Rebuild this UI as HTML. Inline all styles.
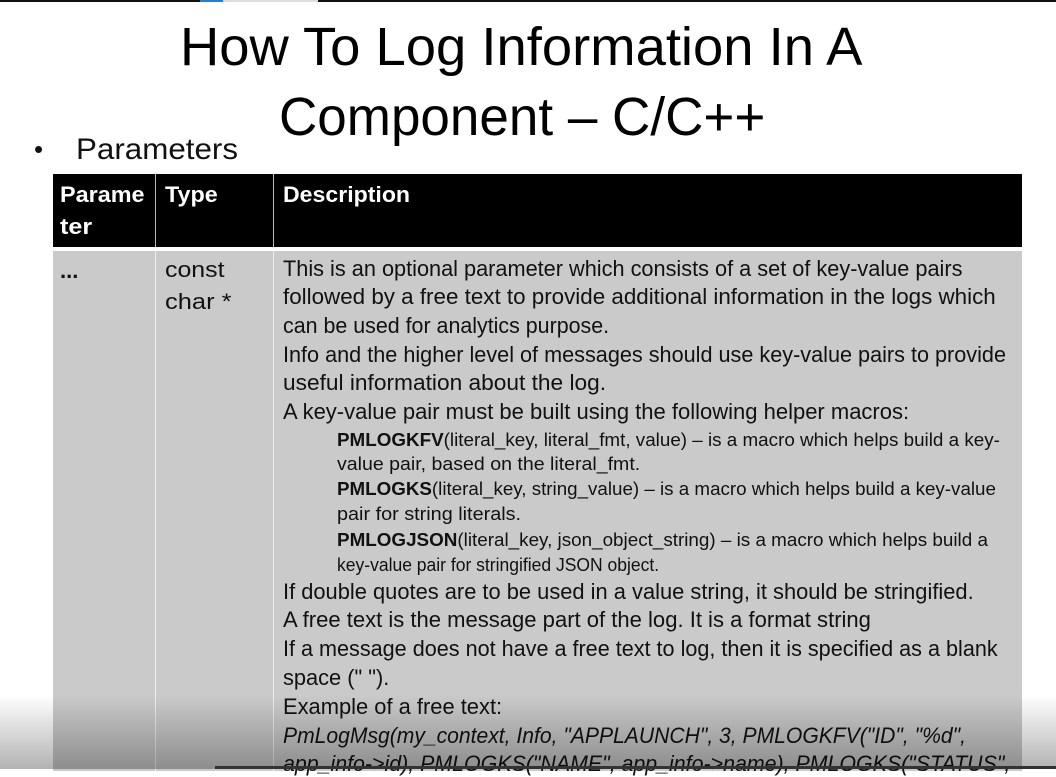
<!DOCTYPE html>
<html><head><meta charset="utf-8">
<style>
html,body{margin:0;padding:0}
body{width:1056px;height:769px;position:relative;overflow:hidden;background:#fff;font-family:"Liberation Sans",sans-serif;color:#111}
.l{position:absolute;white-space:nowrap;transform-origin:0 50%;}
.b{font-size:22px;line-height:26px}
.s{font-size:18px;line-height:22px}
.h{font-size:22px;line-height:26px;font-weight:bold;color:#fff}
.t{font-size:54px;line-height:60px;color:#000}
</style></head><body>
<div style="position:absolute;left:0;top:0;width:1056px;height:2px;background:#111"></div>
<div style="position:absolute;left:200px;top:0;width:23px;height:2px;background:#2a7ad8"></div>
<div style="position:absolute;left:223px;top:0;width:95px;height:2px;background:#ddd"></div>

<div class="l t" style="left:180px;top:17px" title="682">How To Log Information In A</div>
<div class="l t" style="left:279px;top:87px" title="486">Component – C/C++</div>
<div class="l" style="left:34px;top:134px;font-size:26px;line-height:30px">•</div>
<div class="l" style="left:76px;top:133px;font-size:30px;line-height:34px" title="162">Parameters</div>

<div style="position:absolute;left:53px;top:174px;width:969px;height:73px;background:#000"></div>
<div style="position:absolute;left:155px;top:174px;width:1px;height:73px;background:#bbb"></div>
<div style="position:absolute;left:273px;top:174px;width:1px;height:73px;background:#bbb"></div>
<div style="position:absolute;left:53px;top:251px;width:969px;height:520px;background:#cacaca"></div>
<div style="position:absolute;left:155px;top:251px;width:1px;height:520px;background:#eee"></div>
<div style="position:absolute;left:273px;top:251px;width:1px;height:520px;background:#eee"></div>

<div class="l h" style="left:60px;top:182px" title="85">Parame</div>
<div class="l h" style="left:60px;top:214px" title="32">ter</div>
<div class="l h" style="left:165px;top:182px" title="53">Type</div>
<div class="l h" style="left:283px;top:182px" title="127">Description</div>

<div class="l b" style="left:60px;top:258px;font-weight:bold">...</div>
<div class="l b" style="left:165px;top:257px" title="60">const</div>
<div class="l b" style="left:165px;top:289px" title="66">char *</div>

<div class="l b" style="left:283px;top:256px" title="679">This is an optional parameter which consists of a set of key-value pairs</div>
<div class="l b" style="left:283px;top:284px" title="713">followed by a free text to provide additional information in the logs which</div>
<div class="l b" style="left:283px;top:313px" title="326">can be used for analytics purpose.</div>
<div class="l b" style="left:283px;top:342px" title="723">Info and the higher level of messages should use key-value pairs to provide</div>
<div class="l b" style="left:283px;top:370px" title="323">useful information about the log.</div>
<div class="l b" style="left:283px;top:399px" title="626">A key-value pair must be built using the following helper macros:</div>
<div class="l s" style="left:337px;top:429px" title="663"><b>PMLOGKFV</b>(literal_key, literal_fmt, value) – is a macro which helps build a key-</div>
<div class="l s" style="left:337px;top:453px" title="303">value pair, based on the literal_fmt.</div>
<div class="l s" style="left:337px;top:478px" title="659"><b>PMLOGKS</b>(literal_key, string_value) – is a macro which helps build a key-value</div>
<div class="l s" style="left:337px;top:503px" title="184">pair for string literals.</div>
<div class="l s" style="left:337px;top:529px" title="651"><b>PMLOGJSON</b>(literal_key, json_object_string) – is a macro which helps build a</div>
<div class="l s" style="left:337px;top:554px" title="322">key-value pair for stringified JSON object.</div>
<div class="l b" style="left:283px;top:579px" title="691">If double quotes are to be used in a value string, it should be stringified.</div>
<div class="l b" style="left:283px;top:607px" title="588">A free text is the message part of the log. It is a format string</div>
<div class="l b" style="left:283px;top:636px" title="715">If a message does not have a free text to log, then it is specified as a blank</div>
<div class="l b" style="left:283px;top:665px" title="106">space (" ").</div>
<div class="l b" style="left:283px;top:694px" title="219">Example of a free text:</div>
<div class="l b" style="left:283px;top:723px;font-style:italic" title="683">PmLogMsg(my_context, Info, "APPLAUNCH", 3, PMLOGKFV("ID", "%d",</div>
<div class="l b" style="left:283px;top:751px;font-style:italic" title="727">app_info-&gt;id), PMLOGKS("NAME", app_info-&gt;name), PMLOGKS("STATUS",</div>

<div style="position:absolute;left:0;top:695px;width:1056px;height:74px;background:linear-gradient(rgba(0,0,0,0),rgba(0,0,0,0.3))"></div>
<div style="position:absolute;left:215px;top:766px;width:841px;height:3px;background:#333"></div>
<script>
document.querySelectorAll('.l[title]').forEach(function(e){var w=+e.title;e.removeAttribute('title');var s=e.scrollWidth||e.getBoundingClientRect().width;if(s>0)e.style.transform='scaleX('+(w/s)+')';});
</script>
</body></html>
